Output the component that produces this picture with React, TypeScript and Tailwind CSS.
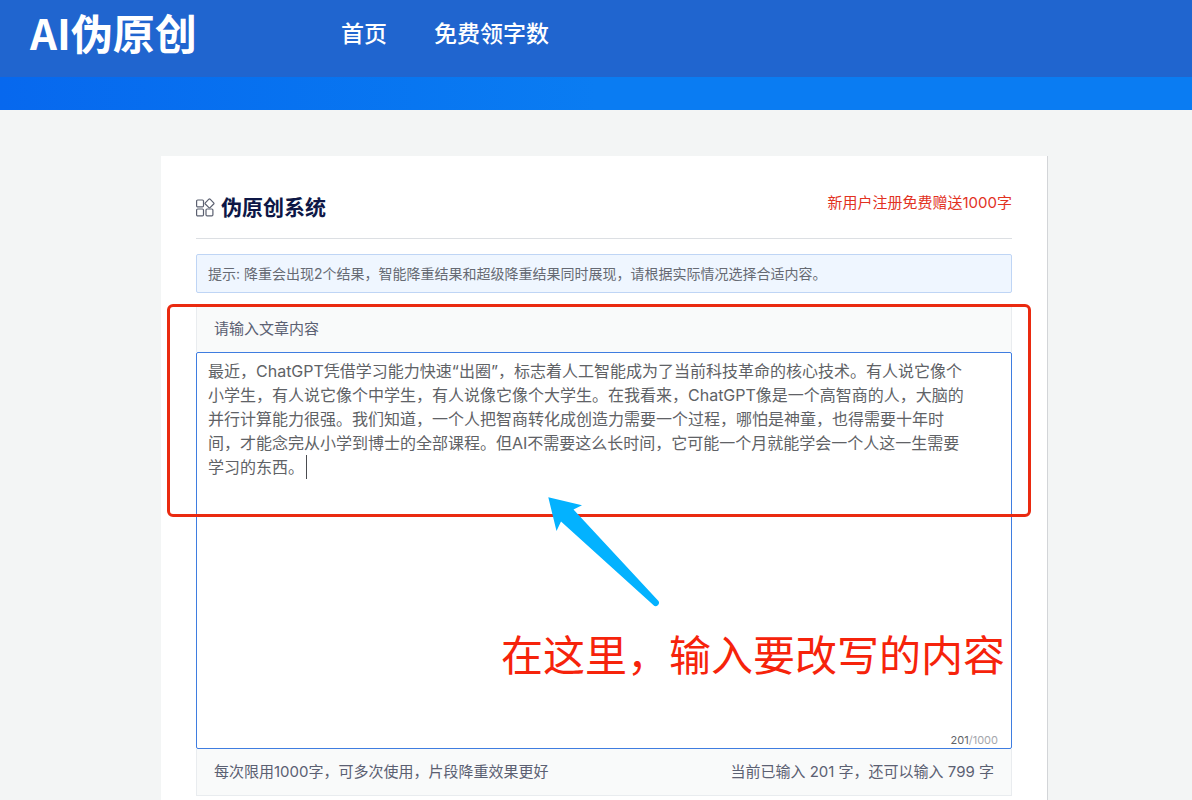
import { useState } from "react";

// ─── Constants ────────────────────────────────────────────────────────────────

const MAX_LENGTH = 1000;
const USED = 201;

const NAV_ITEMS = ["首页", "免费领字数"];

const ARTICLE =
  "最近，ChatGPT凭借学习能力快速“出圈”，标志着人工智能成为了当前科技革命的核心技术。有人说它像个小学生，有人说它像个中学生，有人说像它像个大学生。在我看来，ChatGPT像是一个高智商的人，大脑的并行计算能力很强。我们知道，一个人把智商转化成创造力需要一个过程，哪怕是神童，也得需要十年时间，才能念完从小学到博士的全部课程。但AI不需要这么长时间，它可能一个月就能学会一个人这一生需要学习的东西。";

// ─── Icons ────────────────────────────────────────────────────────────────────

function AppsIcon() {
  return (
    <svg
      className="h-5 w-5 shrink-0"
      viewBox="0 0 20 20"
      fill="none"
      stroke="#5b6070"
      strokeWidth="1.2"
      strokeLinejoin="round"
      aria-hidden="true"
    >
      <rect x="0.6" y="2" width="6.9" height="6.9" rx="1.1" />
      <rect x="0.6" y="11" width="6.9" height="6.9" rx="1.1" />
      <rect x="10" y="11" width="6.9" height="6.9" rx="1.1" />
      <path d="M12.9 1.2a.9.9 0 0 1 1.2 0l3.6 3.6a.9.9 0 0 1 0 1.2l-3.6 3.6a.9.9 0 0 1-1.2 0L9.3 6a.9.9 0 0 1 0-1.2z" />
    </svg>
  );
}

function PointerArrow() {
  return (
    <svg className="h-28 w-28" viewBox="0 0 112 112" fill="#03b2ff" aria-hidden="true">
      <path d="M1.3 1.3L35 9.3L26.5 13.5L111 104.6A3 3 0 0 1 106.3 109L14 25.5L9.5 35Z" />
    </svg>
  );
}

// ─── Sections ─────────────────────────────────────────────────────────────────

function Header() {
  return (
    <header>
      <div className="flex h-[77px] items-start bg-[#2065cf] pl-[30px] text-white">
        <a
          href="#"
          className="mt-1 w-[168px] shrink-0 font-['Noto_Sans_CJK_SC',sans-serif] text-[42px] leading-[56px] font-bold whitespace-nowrap"
        >
          AI伪原创
        </a>
        <nav className="mt-[17px] ml-[143px] flex gap-[47px] text-[23px] leading-[34px] font-medium">
          {NAV_ITEMS.map((item) => (
            <a key={item} href="#">
              {item}
            </a>
          ))}
        </nav>
      </div>
      <div className="h-[33px] bg-linear-to-r from-[#0768ee] to-[#0a7cf2] to-50%" />
    </header>
  );
}

function Editor() {
  const [text, setText] = useState(ARTICLE);

  return (
    <section className="relative mt-3 text-[15px] text-[#5b6072]">
      <label
        htmlFor="article"
        className="flex h-[47px] items-center border-x border-t border-[#e9ecef] bg-[#f9fafa] px-[17px]"
      >
        请输入文章内容
      </label>

      <div className="relative">
        <textarea
          id="article"
          value={text}
          maxLength={MAX_LENGTH}
          spellCheck={false}
          onChange={(e) => setText(e.target.value)}
          className="block h-[397px] w-full resize-none rounded-xs border border-[#3f7de0] bg-white pt-[6px] pr-[41px] pl-[11px] text-base leading-6 text-[#606266] outline-none"
        />
        {/* text cursor after the last character */}
        <span className="absolute top-[103px] left-[110px] h-6 w-px bg-[#4a4c50]" />
        <span className="absolute right-[14px] bottom-px text-[11px] leading-4 text-[#a3a6ac]">
          <span className="text-[#606266]">{USED}</span>/{MAX_LENGTH}
        </span>
      </div>

      <div className="flex h-[47px] items-center justify-between border-x border-b border-[#e9ecef] bg-[#f9fafa] px-[17px]">
        <span>每次限用1000字，可多次使用，片段降重效果更好</span>
        <span>
          当前已输入 {USED} 字，还可以输入 {MAX_LENGTH - USED} 字
        </span>
      </div>

      {/* ── Guide overlay ── */}
      <div className="pointer-events-none absolute -top-px -right-[19px] -left-[29px] h-[213px] rounded-md border-3 border-[#ea2a10]" />
      <div className="pointer-events-none absolute top-[191px] left-[351px]">
        <PointerArrow />
      </div>
      <p className="pointer-events-none absolute top-[321px] right-[7px] text-[42px] leading-[60px] text-[#f6230b]">
        在这里，输入要改写的内容
      </p>
    </section>
  );
}

export default function App() {
  return (
    <div className="flex min-h-screen flex-col bg-[#f3f5f5] font-[Inter,'Noto_Sans_CJK_SC',sans-serif]">
      <Header />
      <main className="flex flex-1 flex-col pt-[46px] pr-36 pl-[161px]">
        <div className="flex-1 border-r border-[#d3d5d8] bg-white px-[35px]">
          <div className="flex h-[83px] items-start justify-between border-b border-[#dcdfe3] pt-9">
            <h1 className="flex items-center gap-[5px] text-[21px] leading-8 font-bold text-[#0d1746]">
              <AppsIcon />
              伪原创系统
            </h1>
            <a href="#" className="text-[15px] leading-[22px] text-[#e2321f]">
              新用户注册免费赠送1000字
            </a>
          </div>

          <p className="mt-[15px] flex h-[39px] items-center rounded-xs border border-[#bfd5f5] bg-[#eff6ff] px-[11px] text-sm text-[#666a73]">
            提示: 降重会出现2个结果，智能降重结果和超级降重结果同时展现，请根据实际情况选择合适内容。
          </p>

          <Editor />
        </div>
      </main>
    </div>
  );
}
